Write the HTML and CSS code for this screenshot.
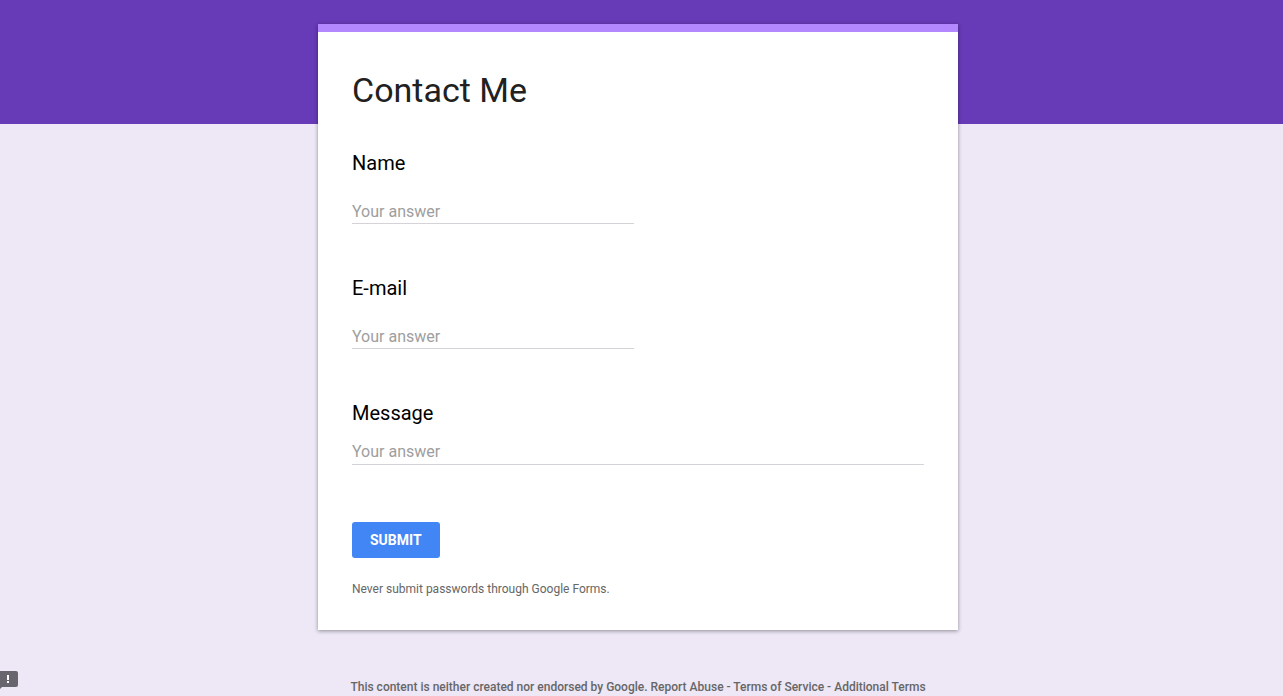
FILE: index.html
```html
<!DOCTYPE html>
<html lang="en">
<head>
<meta charset="utf-8">
<meta name="viewport" content="width=device-width, initial-scale=1">
<title>Contact Me</title>
<link rel="stylesheet" href="styles.css">
</head>
<body>
<main class="page">
  <form class="card">
    <h1 class="title">Contact Me</h1>
    <div class="field">
      <label class="label" for="name">Name</label>
      <input class="answer" id="name" type="text" placeholder="Your answer">
    </div>
    <div class="field">
      <label class="label" for="email">E-mail</label>
      <input class="answer" id="email" type="email" placeholder="Your answer">
    </div>
    <div class="field field-long">
      <label class="label" for="message">Message</label>
      <textarea class="answer" id="message" rows="1" placeholder="Your answer"></textarea>
    </div>
    <button class="submit" type="submit">SUBMIT</button>
    <p class="note">Never submit passwords through Google Forms.</p>
  </form>
  <footer class="footer">This content is neither created nor endorsed by Google. <a href="#abuse">Report Abuse</a> - <a href="#terms">Terms of Service</a> - <a href="#additional">Additional Terms</a></footer>
</main>
<button class="report" type="button" aria-label="Report a problem">
  <svg width="18" height="18" viewBox="0 0 18 18" aria-hidden="true">
    <path fill="#69656e" d="M0 0H16Q18 0 18 2V14Q18 16 16 16H2L0 18Z"/>
    <path fill="#fff" d="M7 4H9V9H7ZM7 10H9V12H7Z"/>
  </svg>
</button>
</body>
</html>
```
FILE: styles.css
```css
* {
  box-sizing: border-box;
}

body {
  margin: 0;
  min-height: 100vh;
  background: linear-gradient(#673ab7 124px, #ede7f6 124px);
  font-family: Roboto, "Liberation Sans", sans-serif;
  color: #000;
}

.page {
  display: flex;
  flex-direction: column;
  align-items: center;
  padding: 24px 7px 0 0;
}

.card {
  width: 100%;
  max-width: 640px;
  padding: 36px 34px 32px;
  border-top: 8px solid #b388ff;
  background: #fff;
  box-shadow: 0 1px 4px rgba(0, 0, 0, 0.4);
}

.title {
  margin: 0 0 38px;
  font-size: 34px;
  font-weight: 400;
  line-height: 44px;
  color: #212121;
}

.field {
  display: flex;
  flex-direction: column;
  gap: 23px;
  margin-bottom: 51px;
}

.field-long {
  gap: 14px;
  margin-bottom: 57px;
}

.label {
  font-size: 20px;
  line-height: 26px;
}

.answer {
  width: 50%;
  min-width: 282px;
  max-width: 282px;
  height: 25px;
  padding: 0;
  border: 0;
  border-bottom: 1px solid #d6d3d8;
  background: transparent;
  font-family: inherit;
  font-size: 16px;
  line-height: 24px;
  resize: none;
  outline: none;
}

.field-long .answer {
  width: 100%;
  max-width: none;
  height: 25px;
  overflow: hidden;
}

.answer::placeholder {
  color: #9e9e9e;
  opacity: 1;
}

.submit {
  display: block;
  height: 36px;
  padding: 0 18px;
  border: 0;
  border-radius: 3px;
  background: #4285f4;
  color: #fff;
  font-family: inherit;
  font-size: 14px;
  font-weight: 700;
}

.note {
  margin: 22px 0 0;
  font-size: 12px;
  line-height: 18px;
  color: #666;
}

.footer {
  padding-top: 48px;
  font-size: 12px;
  font-weight: 500;
  line-height: 18px;
  color: #666;
}

.footer a {
  color: inherit;
  text-decoration: none;
}

.report {
  position: fixed;
  left: 0;
  bottom: 7px;
  padding: 0;
  border: 0;
  background: none;
}

.report svg {
  display: block;
}
```
